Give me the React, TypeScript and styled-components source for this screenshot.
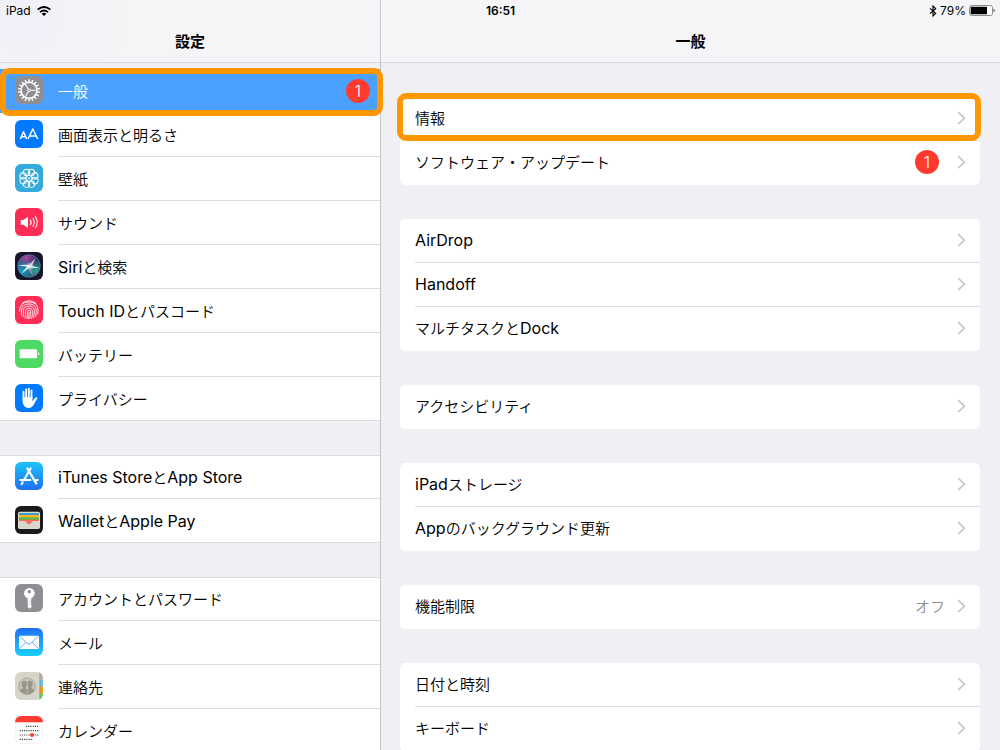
import React, { ReactNode } from "react";
import styled, { createGlobalStyle, css } from "styled-components";

const fontStack = `Inter, "Noto Sans CJK JP", sans-serif`;

const color = {
  canvas: "#efeff4",
  bar: "#f5f5f7",
  barLine: "#d9d9dd",
  line: "#dcdce0",
  text: "#000000",
  muted: "#8e8e93",
  chevron: "#c7c7cc",
  selected: "#4ba1ff",
  badge: "#ff3b30",
  highlight: "#ff9800",
};

const GlobalStyle = createGlobalStyle`
  * { box-sizing: border-box; }
  body { margin: 0; background: ${color.canvas}; }
  h1, h2, ul { margin: 0; padding: 0; }
  ul { list-style: none; }
`;

const Screen = styled.div`
  position: relative;
  display: grid;
  grid-template-columns: minmax(240px, 38%) 1fr;
  height: 100vh;
  overflow: hidden;
  background: ${color.canvas};
  color: ${color.text};
  font-family: ${fontStack};
  font-size: 15px;
  line-height: 20px;
`;

const StatusBar = styled.header`
  position: absolute;
  inset: 0 0 auto 0;
  z-index: 3;
  display: grid;
  grid-template-columns: 1fr auto 1fr;
  align-items: center;
  height: 21px;
  padding: 0 5px 0 6px;
  font-size: 12px;
  line-height: 20px;
`;

const StatusGroup = styled.div<{ $end?: boolean }>`
  display: flex;
  align-items: center;
  justify-content: ${(p) => (p.$end ? "flex-end" : "flex-start")};
  gap: ${(p) => (p.$end ? "3px" : "6px")};
`;

const Clock = styled.time`
  font-weight: 600;
`;

const Sidebar = styled.nav`
  min-width: 0;
`;

const Detail = styled.main`
  min-width: 0;
  border-left: 1px solid #c4c4c9;
`;

const TitleBar = styled.div<{ $tint?: boolean }>`
  display: flex;
  align-items: flex-end;
  justify-content: center;
  height: 63px;
  padding-bottom: 10px;
  border-bottom: 1px solid ${color.barLine};
  background: ${(p) =>
    p.$tint
      ? `radial-gradient(circle at 24px 16px, #f0f0f9 0, ${color.bar} 100px)`
      : color.bar};
`;

const Title = styled.h1`
  font-size: 15px;
  font-weight: 700;
  line-height: 20px;
`;

const SideGroups = styled.div`
  display: flex;
  flex-direction: column;
  gap: 34px;
  padding-top: 6px;
`;

const SideList = styled.ul<{ $first?: boolean }>`
  background: #ffffff;
  box-shadow: ${(p) => (p.$first ? "none" : `inset 0 1px ${color.line}`)};
`;

const highlightFrame = css`
  &::after {
    content: "";
    position: absolute;
    z-index: 2;
    border: 6px solid ${color.highlight};
    border-radius: 9px;
    pointer-events: none;
  }
`;

const SideItem = styled.li<{ $marked?: boolean }>`
  position: relative;
  ${(p) => p.$marked && highlightFrame}
  &::after {
    inset: -1px -3px -3px 0;
  }
  &:last-child {
    box-shadow: inset 0 -1px ${color.line};
  }
`;

const SideButton = styled.button<{ $selected?: boolean }>`
  display: flex;
  width: 100%;
  height: 44px;
  padding: 0 0 0 15px;
  border: 0;
  background: ${(p) => (p.$selected ? color.selected : "transparent")};
  color: ${(p) => (p.$selected ? "#ffffff" : "inherit")};
  font: inherit;
  text-align: left;
  cursor: pointer;
`;

const AppIcon = styled.svg`
  flex: none;
  width: 28px;
  height: 28px;
  margin: 7px 15px 0 0;
  border-radius: 6px;
`;

const SideBody = styled.span<{ $line: boolean }>`
  display: flex;
  flex: 1;
  align-items: center;
  justify-content: space-between;
  min-width: 0;
  height: 44px;
  padding-right: 10px;
  box-shadow: ${(p) => (p.$line ? `inset 0 -1px ${color.line}` : "none")};
`;

const LabelText = styled.span`
  flex: 1;
  font-size: 16px;
  white-space: nowrap;
`;

const Kana = styled.span`
  font-size: 15px;
  font-weight: 350;
`;

const Badge = styled.span`
  display: inline-flex;
  align-items: center;
  justify-content: center;
  width: 24px;
  height: 24px;
  border-radius: 50%;
  background: ${color.badge};
  color: #ffffff;
  font-size: 16px;
  font-weight: 300;
`;

const Cards = styled.div`
  display: flex;
  flex-direction: column;
  gap: 34px;
  padding: 34px 20px 0 19px;
`;

const Card = styled.ul`
  border-radius: 5px;
  background: #ffffff;
`;

const CardItem = styled.li<{ $marked?: boolean }>`
  position: relative;
  padding-left: 15px;
  ${(p) => p.$marked && highlightFrame}
  &::after {
    inset: -4px -1px 0 -3px;
  }
  &:not(:last-child) > button {
    box-shadow: inset 0 -1px ${color.line};
  }
`;

const CardButton = styled.button`
  display: flex;
  align-items: center;
  gap: 12px;
  width: 100%;
  height: 44px;
  padding: 0 14px 2px 0;
  border: 0;
  background: transparent;
  color: inherit;
  font: inherit;
  text-align: left;
  cursor: pointer;
`;

const Value = styled.span`
  color: ${color.muted};
  font-size: 16px;
`;

const BadgeSlot = styled.span`
  display: flex;
  padding-right: 6px;
`;

/* Kana and kanji are set one size smaller so they balance with Latin words. */
const Mixed = ({ text }: { text: string }) => (
  <>
    {text
      .split(/([A-Za-z][A-Za-z ]*)/)
      .filter(Boolean)
      .map((part, i) => (/^[A-Za-z]/.test(part) ? part : <Kana key={i}>{part}</Kana>))}
  </>
);

const Chevron = () => (
  <svg width="9" height="14" viewBox="0 0 9 14" fill="none" stroke={color.chevron} strokeWidth="1.7" aria-hidden="true">
    <path d="M1.2 1.2 7.4 7.2 1.2 13.2" />
  </svg>
);

const Icon = ({ bg, children }: { bg: string; children: ReactNode }) => (
  <AppIcon viewBox="0 0 84 84" aria-hidden="true">
    <rect width="84" height="84" fill={bg} />
    {children}
  </AppIcon>
);

const around = (n: number) => Array.from({ length: n }, (_, i) => (360 / n) * i);

const GearIcon = () => (
  <Icon bg="#8e8e93">
    <g fill="none" stroke="#fff" transform="translate(42 43)">
      <circle r="24" strokeWidth="4.5" />
      {around(18).map((a) => (
        <path key={a} d="M25 0H33" strokeWidth="4.5" transform={`rotate(${a + 10})`} />
      ))}
      {[0, 120, 240].map((a) => (
        <path key={a} d="M4 0H24" strokeWidth="3.2" transform={`rotate(${a})`} />
      ))}
      <circle r="4" strokeWidth="3" />
    </g>
  </Icon>
);

const DisplayIcon = () => (
  <Icon bg="#007aff">
    <g fill="none" stroke="#fff" strokeLinejoin="round">
      <path d="M16 57 25.500 35 35 57M19 50H32" strokeWidth="4.400" />
      <path d="M39 57 53.500 27 68 57M44 48H63" strokeWidth="4.400" />
    </g>
  </Icon>
);

const WallpaperIcon = () => (
  <Icon bg="#34aadc">
    <g fill="none" stroke="#fff" strokeWidth="3" transform="translate(42 43)">
      {around(8).map((a) => (
        <circle key={a} cx="19" r="9.500" transform={`rotate(${a + 22.5})`} />
      ))}
      <circle r="9" />
      <circle r="2" />
    </g>
  </Icon>
);

const SoundIcon = () => (
  <Icon bg="#ff2d55">
    <path d="M17 36H25L39 26V60L25 50H17Z" fill="#fff" />
    <g fill="none" stroke="#fff" strokeWidth="3.200" strokeLinecap="round">
      <path d="M46 36Q51 43 46 50" />
      <path d="M54 31Q62 43 54 55" />
      <path d="M61 26Q73 43 61 60" />
    </g>
  </Icon>
);

const SiriIcon = () => (
  <Icon bg="#15162c">
    <defs>
      <radialGradient id="siriPink" cx="36%" cy="12%" r="52%">
        <stop offset="0" stopColor="#a8479c" />
        <stop offset="1" stopColor="#a8479c" stopOpacity="0" />
      </radialGradient>
      <radialGradient id="siriTeal" cx="18%" cy="72%" r="56%">
        <stop offset="0" stopColor="#14a7c4" />
        <stop offset="1" stopColor="#14a7c4" stopOpacity="0" />
      </radialGradient>
      <radialGradient id="siriGreen" cx="80%" cy="70%" r="50%">
        <stop offset="0" stopColor="#2fa58c" />
        <stop offset="1" stopColor="#2fa58c" stopOpacity="0" />
      </radialGradient>
      <radialGradient id="siriGlow">
        <stop offset="0" stopColor="#ffffff" />
        <stop offset="0.4" stopColor="#d6f4ff" stopOpacity="0.6" />
        <stop offset="1" stopColor="#d6f4ff" stopOpacity="0" />
      </radialGradient>
    </defs>
    <circle cx="42" cy="42" r="34" fill="#28306a" />
    <circle cx="42" cy="42" r="34" fill="url(#siriPink)" />
    <circle cx="42" cy="42" r="34" fill="url(#siriTeal)" />
    <circle cx="42" cy="42" r="34" fill="url(#siriGreen)" />
    <circle cx="42" cy="42" r="34" fill="none" stroke="#8fa3c0" strokeWidth="1.800" opacity="0.7" />
    <circle cx="44" cy="43" r="14" fill="url(#siriGlow)" />
    <g fill="#fff">
      <path d="M46 44 10 41Q28 36 46 40Z" opacity="0.9" />
      <path d="M41 42 61 18Q57 33 48 44Z" fill="#ffc9e6" opacity="0.9" />
      <path d="M42 40 73 47Q56 50 42 45Z" fill="#d8fff0" opacity="0.9" />
      <path d="M42 42 55 72Q46 62 41 45Z" fill="#ff9fd0" opacity="0.9" />
      <path d="M46 44 20 65Q29 50 41 40Z" opacity="0.9" />
    </g>
  </Icon>
);

const TouchIdIcon = () => (
  <Icon bg="#ff2d55">
    <g fill="none" stroke="#fff" strokeWidth="2.6" strokeLinecap="round">
      <path d="M22 21Q42 7 62 21" />
      <path d="M14 46Q13 18 42 18Q71 18 69 46L68 54" />
      <path d="M19 57Q20 50 19.500 42Q21 24 42 24Q63 24 63.500 43Q64 53 62 61" />
      <path d="M24.500 62Q26 52 25 43Q27 30 42 30Q57 30 58 44Q58 56 56 65" />
      <path d="M30 66Q32 55 31 44Q33 36 42 36Q51 36 52 44Q53 58 50 68" />
      <path d="M36 68Q38 57 37 46Q38 42 42 42Q46 42 46.500 46Q47 58 44 68" />
      <path d="M42 48Q42.500 58 40 68" />
    </g>
  </Icon>
);

const BatteryIcon = () => (
  <Icon bg="#4cd964">
    <rect x="14" y="28" width="52" height="27" rx="3" fill="#fff" />
    <path d="M69 37Q73 38 73 41.500Q73 45 69 46Z" fill="#fff" />
  </Icon>
);

const HandIcon = () => (
  <Icon bg="#007aff">
    <g fill="none" stroke="#fff" strokeWidth="5.500" strokeLinecap="round">
      <path d="M25.500 44V23" />
      <path d="M33.500 42V16" />
      <path d="M41.500 42V14" />
      <path d="M49.500 44V19" />
    </g>
    <path d="M22.800 40H52.200V52L60 42Q64 38 67.500 42L57 61Q52 72 40 72Q25 71 22.800 54Z" fill="#fff" />
  </Icon>
);

const AppStoreIcon = () => (
  <Icon bg="url(#storeBlue)">
    <defs>
      <linearGradient id="storeBlue" x1="0" y1="0" x2="0" y2="1">
        <stop offset="0" stopColor="#1cc4fb" />
        <stop offset="1" stopColor="#1d6ff2" />
      </linearGradient>
    </defs>
    <g stroke="#fff" strokeWidth="6.500" strokeLinecap="round" fill="none">
      <path d="M47 19 27 54" />
      <path d="M37 19 64 65" />
      <path d="M16 54H46" />
      <path d="M59 54H68" />
      <path d="M23 61 20 66" />
    </g>
  </Icon>
);

const WalletIcon = () => (
  <Icon bg="#1b1b1d">
    <rect x="9" y="17" width="66" height="52" rx="5" fill="#dcd9cf" />
    <rect x="12" y="21" width="60" height="12" rx="3" fill="#3c9bd0" />
    <rect x="12" y="27" width="60" height="8" fill="#fdb515" />
    <rect x="12" y="34" width="60" height="8" fill="#5eb646" />
    <path d="M12 41H72V46H12Z" fill="#f26d5f" />
    <path d="M12 45H28Q32 45 34 49Q37 55 42 55Q47 55 50 49Q52 45 56 45H72V66H12Z" fill="#d8d5cb" />
    <path d="M28 45Q32 45 34 49Q37 55 42 55Q47 55 50 49Q52 45 56 45Z" fill="#f26d5f" />
  </Icon>
);

const KeyIcon = () => (
  <Icon bg="#8e8e93">
    <circle cx="43" cy="28" r="16" fill="#fff" />
    <circle cx="43" cy="23" r="5" fill="#8e8e93" />
    <path d="M38 40H49V49L46 52L50 56L46 60L50 64V68L44 74L38 69Z" fill="#fff" />
    <path d="M42 46V69" stroke="#c4c4c8" strokeWidth="1.500" />
  </Icon>
);

const MailIcon = () => (
  <Icon bg="url(#mailBlue)">
    <defs>
      <linearGradient id="mailBlue" x1="0" y1="0" x2="0" y2="1">
        <stop offset="0" stopColor="#1e6ff3" />
        <stop offset="1" stopColor="#1ad0fc" />
      </linearGradient>
    </defs>
    <rect x="12" y="23" width="60" height="40" rx="4" fill="#fff" />
    <g fill="none" stroke="#4a9df5" strokeWidth="2.600">
      <path d="M14 25 38 47Q42 50 46 47L70 25" />
      <path d="M14 61 33 43M70 61 51 43" />
    </g>
  </Icon>
);

const ContactsIcon = () => (
  <Icon bg="#d7d4c9">
    <rect x="74" width="10" height="24" fill="#b7b5ac" />
    <rect x="74" y="24" width="10" height="20" fill="#5ac3f5" />
    <rect x="74" y="44" width="10" height="21" fill="#ff9500" />
    <rect x="74" y="65" width="10" height="19" fill="#4cd964" />
    <path d="M75 0V84" stroke="#8f8d85" strokeWidth="2" />
    <circle cx="36" cy="43" r="25" fill="#c6c3b8" stroke="#a29f95" strokeWidth="2.500" />
    <g fill="#98958b">
      <ellipse cx="28" cy="36" rx="8" ry="10" />
      <path d="M24 43H32V49L39 53Q38 62 35 66Q20 65 14 54L24 49Z" />
      <ellipse cx="45" cy="36" rx="8" ry="10" />
      <path d="M41 43H49V49L59 54Q52 66 38 67Q36 60 36 53L41 49Z" />
    </g>
    <path d="M36.500 28V62" stroke="#c6c3b8" strokeWidth="2" />
  </Icon>
);

const CalendarIcon = () => (
  <Icon bg="#ffffff">
    <rect x="0.800" y="0.800" width="82.400" height="82.400" rx="17" fill="none" stroke="#e3e3e6" strokeWidth="1.600" />
    <path d="M0 0H84V19H0Z" fill="#ff3b30" />
    <g stroke="#3c3c40" strokeWidth="3.400" strokeDasharray="3.400 3.200" fill="none">
      <path d="M33 31H72" />
      <path d="M14 44H72" />
      <path d="M14 57H72" />
      <path d="M14 70H54" />
    </g>
    <circle cx="51" cy="57" r="6" fill="#ff3b30" />
  </Icon>
);

interface SideEntry {
  label: string;
  icon: ReactNode;
  badge?: number;
  selected?: boolean;
}

const sideGroups: SideEntry[][] = [
  [
    { label: "一般", icon: <GearIcon />, badge: 1, selected: true },
    { label: "画面表示と明るさ", icon: <DisplayIcon /> },
    { label: "壁紙", icon: <WallpaperIcon /> },
    { label: "サウンド", icon: <SoundIcon /> },
    { label: "Siriと検索", icon: <SiriIcon /> },
    { label: "Touch IDとパスコード", icon: <TouchIdIcon /> },
    { label: "バッテリー", icon: <BatteryIcon /> },
    { label: "プライバシー", icon: <HandIcon /> },
  ],
  [
    { label: "iTunes StoreとApp Store", icon: <AppStoreIcon /> },
    { label: "WalletとApple Pay", icon: <WalletIcon /> },
  ],
  [
    { label: "アカウントとパスワード", icon: <KeyIcon /> },
    { label: "メール", icon: <MailIcon /> },
    { label: "連絡先", icon: <ContactsIcon /> },
    { label: "カレンダー", icon: <CalendarIcon /> },
  ],
];

interface CardEntry {
  label: string;
  badge?: number;
  value?: string;
  marked?: boolean;
}

const cards: CardEntry[][] = [
  [
    { label: "情報", marked: true },
    { label: "ソフトウェア・アップデート", badge: 1 },
  ],
  [{ label: "AirDrop" }, { label: "Handoff" }, { label: "マルチタスクとDock" }],
  [{ label: "アクセシビリティ" }],
  [{ label: "iPadストレージ" }, { label: "Appのバックグラウンド更新" }],
  [{ label: "機能制限", value: "オフ" }],
  [{ label: "日付と時刻" }, { label: "キーボード" }],
];

const WifiGlyph = () => (
  <svg width="14" height="10" viewBox="0 0 42 30" fill="none" stroke="#000" strokeWidth="5.500" aria-label="Wi-Fi">
    <path d="M2 11Q21 -5 40 11" />
    <path d="M9 18.500Q21 8.500 33 18.500" />
    <path d="M14 23Q21 17 28 23L21 30Z" fill="#000" stroke="none" />
  </svg>
);

const BluetoothGlyph = () => (
  <svg width="8" height="12" viewBox="0 0 24 36" fill="none" stroke="#000" strokeWidth="3.400" aria-label="Bluetooth">
    <path d="M3 10 20 25 12 33V3L20 11 3 26" />
  </svg>
);

const BatteryGlyph = () => (
  <svg width="26" height="11" viewBox="0 0 78 33" aria-hidden="true">
    <rect x="1.500" y="1.500" width="69" height="30" rx="6" fill="#fff" stroke="#77777a" strokeWidth="2.500" />
    <rect x="5" y="5" width="49" height="23" rx="1" fill="#000" />
    <path d="M73 11Q78 13 78 16.500Q78 20 73 22Z" fill="#77777a" />
  </svg>
);

export default function App() {
  return (
    <>
      <GlobalStyle />
      <Screen>
        <StatusBar>
          <StatusGroup>
            <span>iPad</span>
            <WifiGlyph />
          </StatusGroup>
          <Clock>16:51</Clock>
          <StatusGroup $end>
            <BluetoothGlyph />
            <span>79%</span>
            <BatteryGlyph />
          </StatusGroup>
        </StatusBar>

        <Sidebar>
          <TitleBar $tint>
            <Title as="h2">設定</Title>
          </TitleBar>
          <SideGroups>
            {sideGroups.map((group, g) => (
              <SideList key={g} $first={g === 0}>
                {group.map((entry, i) => (
                  <SideItem key={entry.label} $marked={entry.selected}>
                    <SideButton type="button" $selected={entry.selected}>
                      {entry.icon}
                      <SideBody $line={!entry.selected && i < group.length - 1}>
                        <LabelText>
                          <Mixed text={entry.label} />
                        </LabelText>
                        {entry.badge && <Badge>{entry.badge}</Badge>}
                      </SideBody>
                    </SideButton>
                  </SideItem>
                ))}
              </SideList>
            ))}
          </SideGroups>
        </Sidebar>

        <Detail>
          <TitleBar>
            <Title>一般</Title>
          </TitleBar>
          <Cards>
            {cards.map((card, c) => (
              <Card key={c}>
                {card.map((entry) => (
                  <CardItem key={entry.label} $marked={entry.marked}>
                    <CardButton type="button">
                      <LabelText>
                        <Mixed text={entry.label} />
                      </LabelText>
                      {entry.badge && (
                        <BadgeSlot>
                          <Badge>{entry.badge}</Badge>
                        </BadgeSlot>
                      )}
                      {entry.value && (
                        <Value>
                          <Mixed text={entry.value} />
                        </Value>
                      )}
                      <Chevron />
                    </CardButton>
                  </CardItem>
                ))}
              </Card>
            ))}
          </Cards>
        </Detail>
      </Screen>
    </>
  );
}
